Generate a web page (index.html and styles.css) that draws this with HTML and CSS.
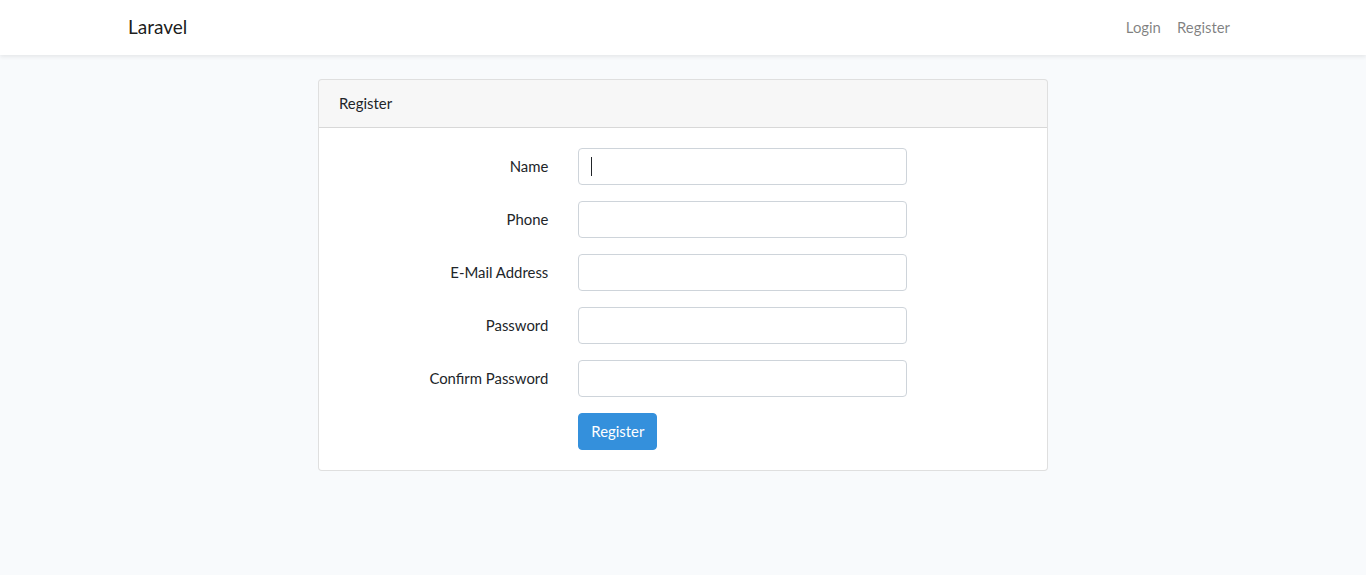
FILE: index.html
```html
<!DOCTYPE html>
<html lang="en">
<head>
<meta charset="utf-8">
<title>Laravel</title>
<link rel="stylesheet" href="styles.css">
</head>
<body>
<div class="app">
  <nav class="navbar">
    <div class="container nav-inner">
      <a class="brand" href="#">Laravel</a>
      <ul class="nav-links">
        <li><a class="nav-link" href="#">Login</a></li>
        <li><a class="nav-link" href="#">Register</a></li>
      </ul>
    </div>
  </nav>
  <main class="main">
    <div class="container">
      <div class="card">
        <div class="card-header">Register</div>
        <div class="card-body">
          <form class="form">
            <div class="form-row">
              <label class="form-label" for="name">Name</label>
              <div class="field field-focused"><input id="name" class="form-control" type="text"></div>
            </div>
            <div class="form-row">
              <label class="form-label" for="phone">Phone</label>
              <div class="field"><input id="phone" class="form-control" type="text"></div>
            </div>
            <div class="form-row">
              <label class="form-label" for="email">E-Mail Address</label>
              <div class="field"><input id="email" class="form-control" type="email"></div>
            </div>
            <div class="form-row">
              <label class="form-label" for="password">Password</label>
              <div class="field"><input id="password" class="form-control" type="password"></div>
            </div>
            <div class="form-row">
              <label class="form-label" for="password-confirm">Confirm Password</label>
              <div class="field"><input id="password-confirm" class="form-control" type="password"></div>
            </div>
            <div class="form-row form-row-last">
              <span></span>
              <div class="field"><button type="button" class="btn-primary">Register</button></div>
            </div>
          </form>
        </div>
      </div>
    </div>
  </main>
</div>
</body>
</html>
```

FILE: styles.css
```css
* { box-sizing: border-box; }
html, body { margin: 0; padding: 0; }
body {
  background: #f8fafc;
  color: #212529;
  font-family: "Lato", "Noto Sans", sans-serif;
  font-size: 14.9px;
  line-height: 23.04px;
}
a { text-decoration: none; }
.container {
  width: 1140px;
  margin: 0 auto;
  padding: 0 15px;
}
.navbar {
  background: #fff;
  box-shadow: 0 2px 4px rgba(0,0,0,.075);
  padding: 8px 0;
  position: relative;
}
.nav-inner {
  display: flex;
  align-items: center;
  justify-content: space-between;
}
.brand {
  color: rgba(0,0,0,.9);
  font-size: 19px;
  line-height: 28.8px;
  padding: 5px 0;
}
.nav-links {
  display: flex;
  list-style: none;
  margin: 0;
  padding: 0;
}
.nav-link {
  display: block;
  color: rgba(0,0,0,.5);
  padding: 8px;
}
.main {
  padding: 24px 0;
}
.main .container {
  display: flex;
  justify-content: center;
}
.card {
  width: 730px;
  background: #fff;
  border: 1px solid rgba(0,0,0,.125);
  border-radius: 4px;
}
.card-header {
  background: rgba(0,0,0,.03);
  border-bottom: 1px solid rgba(0,0,0,.125);
  padding: 12px 20px;
  border-radius: 3px 3px 0 0;
}
.card-body {
  padding: 20px;
}
.form-row {
  display: grid;
  grid-template-columns: 209.33px 329px;
  column-gap: 30px;
  align-items: center;
  margin-bottom: 16px;
}
.form-row-last { margin-bottom: 0; }
.form-label {
  text-align: right;
  padding: 7px 0;
}
.field { position: relative; }
.form-control {
  display: block;
  width: 100%;
  height: 37px;
  padding: 6px 12px;
  font: inherit;
  color: #495057;
  background: #fff;
  border: 1px solid #ced4da;
  border-radius: 4px;
  outline: none;
}
.field-focused::after {
  content: "";
  position: absolute;
  left: 13px;
  top: 9px;
  width: 1px;
  height: 19px;
  background: #212529;
}
.btn-primary {
  display: inline-block;
  font: inherit;
  color: #fff;
  background: #3490dc;
  border: 1px solid #3490dc;
  border-radius: 4px;
  padding: 6px 12px;
  line-height: 23.04px;
  cursor: pointer;
}
```
